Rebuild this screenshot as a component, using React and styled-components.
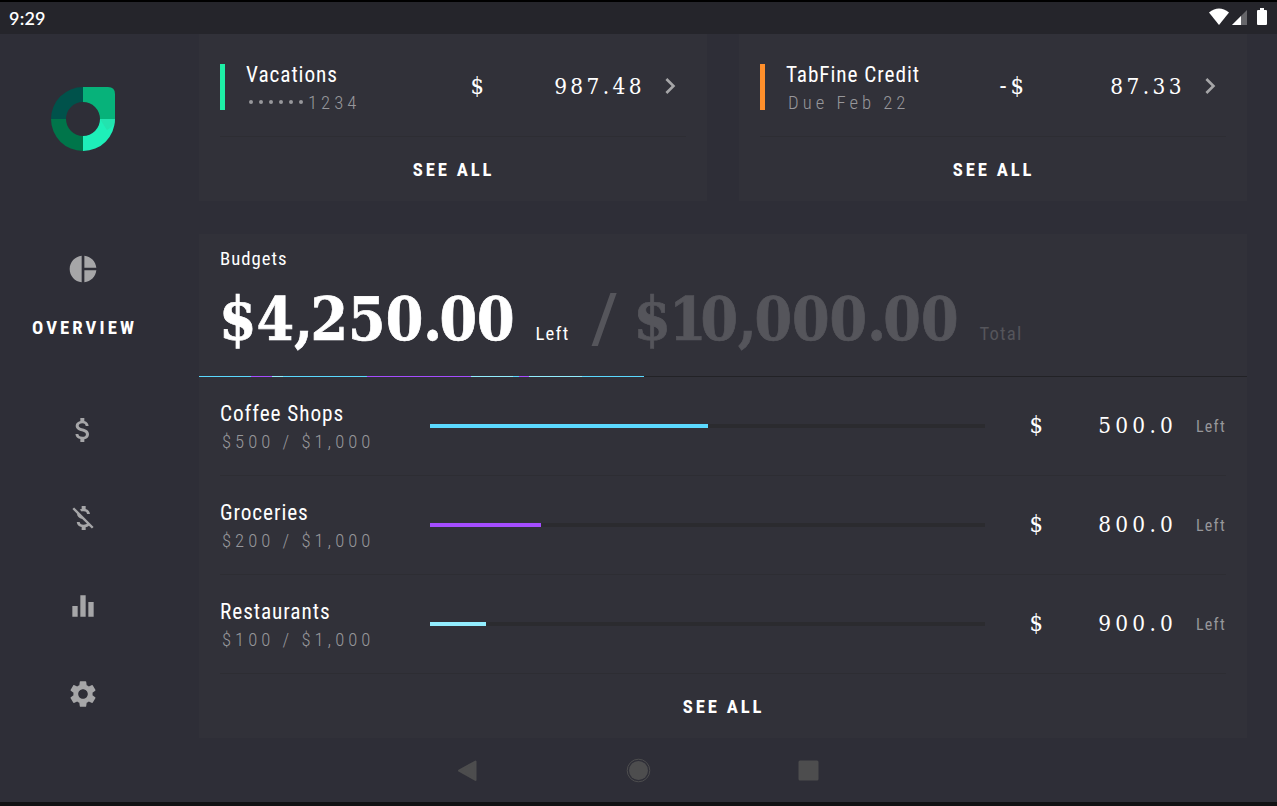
import React from 'react';
import styled, { createGlobalStyle } from 'styled-components';
import { MdPieChart, MdAttachMoney, MdMoneyOff, MdEqualizer, MdSettings, MdChevronRight } from 'react-icons/md';

const GlobalStyle = createGlobalStyle`
  * { box-sizing: border-box; }
  body { margin: 0; background: #2e2e37; overflow: hidden; }
`;

const condensed = '"Roboto Condensed", Roboto, sans-serif';
const slab = '"DejaVu Serif Condensed", "DejaVu Serif", serif';

const Screen = styled.div`
  width: 1277px;
  height: 806px;
  display: flex;
  flex-direction: column;
  background: #2e2e37;
  border-top: 2px solid #000;
  border-bottom: 4px solid #111113;
  color: #fff;
  font-family: ${condensed};
  font-stretch: 75%;
  white-space: nowrap;
  overflow: hidden;
`;

const StatusBar = styled.header`
  height: 32px;
  flex: none;
  display: flex;
  justify-content: space-between;
  background: #25252b;
  padding: 0 9px;
`;

const Clock = styled.span`
  font: 600 18px/33px Lato, sans-serif;
  letter-spacing: 0.2px;
`;

const StatusIcons = styled.svg`
  width: 60px;
  height: 32px;
`;

const Body = styled.div`
  height: 705px;
  flex: none;
  display: flex;
`;

const Sidebar = styled.nav`
  width: 166px;
  padding-top: 53px;
  display: flex;
  flex-direction: column;
  align-items: center;
`;

const Logo = styled.svg`
  width: 64px;
  height: 64px;
  flex: none;
  margin-bottom: 102px;
`;

const NavItem = styled.div`
  height: ${(p) => (p.$open ? 161 : 88)}px;
  flex: none;
  display: flex;
  flex-direction: column;
  align-items: center;
  color: #a6a6a8;
  svg { width: 32px; height: 32px; }
`;

const NavLabel = styled.span`
  margin: 29px 0 0 3px;
  color: #fff;
  font-size: 18.7px;
  line-height: 28px;
  font-weight: 700;
  letter-spacing: 3.1px;
`;

const Content = styled.main`
  width: 1048px;
  margin-left: 33px;
`;

const TopCards = styled.div`
  display: grid;
  grid-template-columns: 508px 508px;
  gap: 32px;
  margin-bottom: 33px;
`;

const Card = styled.section`
  background: #313139;
`;

const AccountRow = styled.div`
  height: 103px;
  margin: 0 21px;
  padding: 30px 10px 0 0;
  display: flex;
  border-bottom: 1px solid #2d2d33;
`;

const Stripe = styled.i`
  width: 5px;
  height: 46px;
  margin-right: 21px;
  background: ${(p) => p.$color};
`;

const Labels = styled.div`
  width: ${(p) => p.$width}px;
  flex: none;
  margin-top: ${(p) => p.$shift}px;
  display: flex;
  flex-direction: column;
`;

const Name = styled.span`
  font-size: 21.3px;
  line-height: 26px;
  height: 28px;
  letter-spacing: 0.92px;
`;

const Detail = styled.span`
  padding-left: 2px;
  margin-top: -1px;
  font-size: 18.7px;
  line-height: 28px;
  font-weight: 300;
  letter-spacing: 4px;
  color: #97979b;
`;

const Dots = styled.span`
  display: inline-flex;
  gap: 6px;
  margin: 0 5px 0 1px;
  vertical-align: 5px;
  i { width: 4px; height: 4px; border-radius: 50%; background: #97979b; }
`;

const Sign = styled.span`
  width: ${(p) => (p.$wide ? 58 : 30)}px;
  flex: none;
  font: 400 23.5px/30px ${slab};
  text-align: right;
`;

const Minus = styled.span`
  margin-right: 4px;
`;

const Amount = styled.span`
  flex: 1;
  font: 400 22.4px/30px ${slab};
  letter-spacing: ${(p) => p.$spacing}px;
  text-align: right;
`;

const Chevron = styled(MdChevronRight)`
  width: 32px;
  height: 32px;
  margin: 6px -10px 0 9px;
  color: #a6a6a8;
`;

const SeeAll = styled.div`
  height: 64px;
  padding-left: 1px;
  font-size: 18.7px;
  line-height: 67px;
  font-weight: 700;
  letter-spacing: 2.8px;
  text-align: center;
`;

const BudgetHead = styled.div`
  height: 142px;
  padding: 11px 21px 0;
`;

const Title = styled.div`
  font-size: 18.7px;
  line-height: 28px;
  letter-spacing: 1px;
`;

const Totals = styled.div`
  display: flex;
  align-items: baseline;
  line-height: 88px;
  margin-top: 2px;
`;

const Big = styled.span`
  font: 700 60px/88px ${slab};
  margin-left: -1px;
  color: ${(p) => (p.$dim ? '#55555b' : '#fff')};
  -webkit-text-stroke: 0.7px currentColor;
`;

const Tight = styled.span`
  letter-spacing: ${(p) => p.$by}px;
`;

const Slash = styled.span`
  position: relative;
  top: 2px;
  width: 65px;
  padding-left: 22px;
  font: 500 68px/84px Roboto, sans-serif;
  font-stretch: 100%;
  color: #55555b;
`;

const BigNote = styled.span`
  margin-left: 21px;
  font-size: 18.7px;
  letter-spacing: 1.2px;
  color: ${(p) => (p.$dim ? '#55555b' : '#fff')};
`;

const SpendBar = styled.div`
  height: 1px;
  display: flex;
  background: #222226;
`;

const Segment = styled.i`
  width: ${(p) => p.$w}px;
  background: ${(p) => p.$color};
`;

const BudgetRow = styled.div`
  height: 99px;
  margin: 0 21px;
  padding-top: 23px;
  display: flex;
  border-bottom: 1px solid #2d2d33;
`;

const Track = styled.div`
  width: 555px;
  height: 4px;
  flex: none;
  margin-top: 24px;
  background: #2b2b2f;
`;

const Fill = styled.div`
  width: ${(p) => p.$pct}%;
  height: 4px;
  background: ${(p) => p.$color};
`;

const LeftNote = styled.span`
  width: 49px;
  text-align: right;
  font-size: 16px;
  line-height: 53px;
  letter-spacing: 1.3px;
  color: #97979b;
`;

const RowMoney = styled.div`
  display: flex;
  flex: 1;
  padding-top: ${(p) => p.$top}px;
`;

const NavBar = styled.footer`
  flex: 1;
  display: flex;
  justify-content: center;
  svg { width: 364px; height: 63px; margin-right: 1px; }
`;

const BLUE = '#5bd9ff';
const PURPLE = '#a54dff';
const ICE = '#93eeff';

const segments = [
  [52, BLUE], [21, PURPLE], [11, ICE], [84, BLUE], [104, PURPLE],
  [42, ICE], [6, BLUE], [10, PURPLE], [53, ICE], [62, BLUE],
];

const budgets = [
  { name: 'Coffee Shops', detail: '$500 / $1,000', pct: 50, color: BLUE, left: '500.0' },
  { name: 'Groceries', detail: '$200 / $1,000', pct: 20, color: PURPLE, left: '800.0' },
  { name: 'Restaurants', detail: '$100 / $1,000', pct: 10, color: ICE, left: '900.0' },
];

const Comma = () => <Tight $by={-2.4}>,</Tight>;
const Point = () => <Tight $by={-2.6}>.</Tight>;

function Account({ color, name, detail, sign, amount }) {
  return (
    <Card>
      <AccountRow>
        <Stripe $color={color} />
        <Labels $width={208} $shift={-2}>
          <Name>{name}</Name>
          <Detail>{detail}</Detail>
        </Labels>
        <RowMoney $top={7}>
          <Sign>{sign}</Sign>
          <Amount $spacing={3.4}>{amount}</Amount>
        </RowMoney>
        <Chevron />
      </AccountRow>
      <SeeAll>SEE ALL</SeeAll>
    </Card>
  );
}

export default function App() {
  return (
    <Screen>
      <GlobalStyle />
      <StatusBar>
        <Clock>9:29</Clock>
        <StatusIcons viewBox="1208 2 60 32">
          <path d="M1209 12.6Q1219 4.400 1229 12.600L1219 25z" fill="#fff" />
          <path d="M1247 10v15h-15z" fill="#66666a" />
          <path d="M1241 16v9h-9z" fill="#fff" />
          <path d="M1260 8h4v2h2q1 0 1 1v13q0 1-1 1h-8q-1 0-1-1V11q0-1 1-1h2z" fill="#fff" />
        </StatusIcons>
      </StatusBar>
      <Body>
        <Sidebar>
          <Logo viewBox="0 0 64 64">
            <path d="M32 0A32 32 0 0 0 0 32h15a17 17 0 0 1 17-17z" fill="#00524b" />
            <path d="M0 32a32 32 0 0 0 32 32V49a17 17 0 0 1-17-17z" fill="#00754a" />
            <path d="M32 0h25q7 0 7 7v25H49a17 17 0 0 0-17-17z" fill="#07b27a" />
            <path d="M64 32a32 32 0 0 1-32 32V49a17 17 0 0 0 17-17z" fill="#1eefb9" />
            <path d="M49 32h15v3q-1 4-8 8z" fill="#26dba9" opacity=".65" />
          </Logo>
          <NavItem $open>
            <MdPieChart />
            <NavLabel>OVERVIEW</NavLabel>
          </NavItem>
          <NavItem><MdAttachMoney /></NavItem>
          <NavItem><MdMoneyOff /></NavItem>
          <NavItem><MdEqualizer /></NavItem>
          <NavItem><MdSettings /></NavItem>
        </Sidebar>
        <Content>
          <TopCards>
            <Account
              color="#1eefa6"
              name="Vacations"
              detail={<><Dots><i /><i /><i /><i /><i /><i /></Dots>1234</>}
              sign="$"
              amount="987.48"
            />
            <Account
              color="#ff8f2b"
              name="TabFine Credit"
              detail="Due Feb 22"
              sign={<><Minus>-</Minus>$</>}
              amount="87.33"
            />
          </TopCards>
          <Card>
            <BudgetHead>
              <Title>Budgets</Title>
              <Totals>
                <Big>$4<Comma />250<Point />00</Big>
                <BigNote>Left</BigNote>
                <Slash>/</Slash>
                <Big $dim><Tight $by={-2}>$</Tight><Tight $by={-6}>1</Tight>0<Comma />000<Point />00</Big>
                <BigNote $dim>Total</BigNote>
              </Totals>
            </BudgetHead>
            <SpendBar>
              {segments.map(([w, color], i) => <Segment key={i} $w={w} $color={color} />)}
            </SpendBar>
            {budgets.map((b) => (
              <BudgetRow key={b.name}>
                <Labels $width={210} $shift={1}>
                  <Name>{b.name}</Name>
                  <Detail>{b.detail}</Detail>
                </Labels>
                <Track><Fill $pct={b.pct} $color={b.color} /></Track>
                <RowMoney $top={10}>
                  <Sign $wide>$</Sign>
                  <Amount $spacing={4.2}>{b.left}</Amount>
                </RowMoney>
                <LeftNote>Left</LeftNote>
              </BudgetRow>
            ))}
            <SeeAll>SEE ALL</SeeAll>
          </Card>
        </Content>
      </Body>
      <NavBar>
        <svg viewBox="456 739 364 63">
          <path d="M475.500 761.500v18.500l-16.500-9.300z" fill="#4d4d4e" stroke="#4d4d4e" strokeWidth="2" strokeLinejoin="round" />
          <circle cx="638.500" cy="770.500" r="9.500" fill="#4d4d4e" />
          <circle cx="638.500" cy="770.500" r="11.300" fill="none" stroke="#4d4d4e" />
          <rect x="798.500" y="760.500" width="20" height="20" rx="1.500" fill="#4d4d4e" />
        </svg>
      </NavBar>
    </Screen>
  );
}
